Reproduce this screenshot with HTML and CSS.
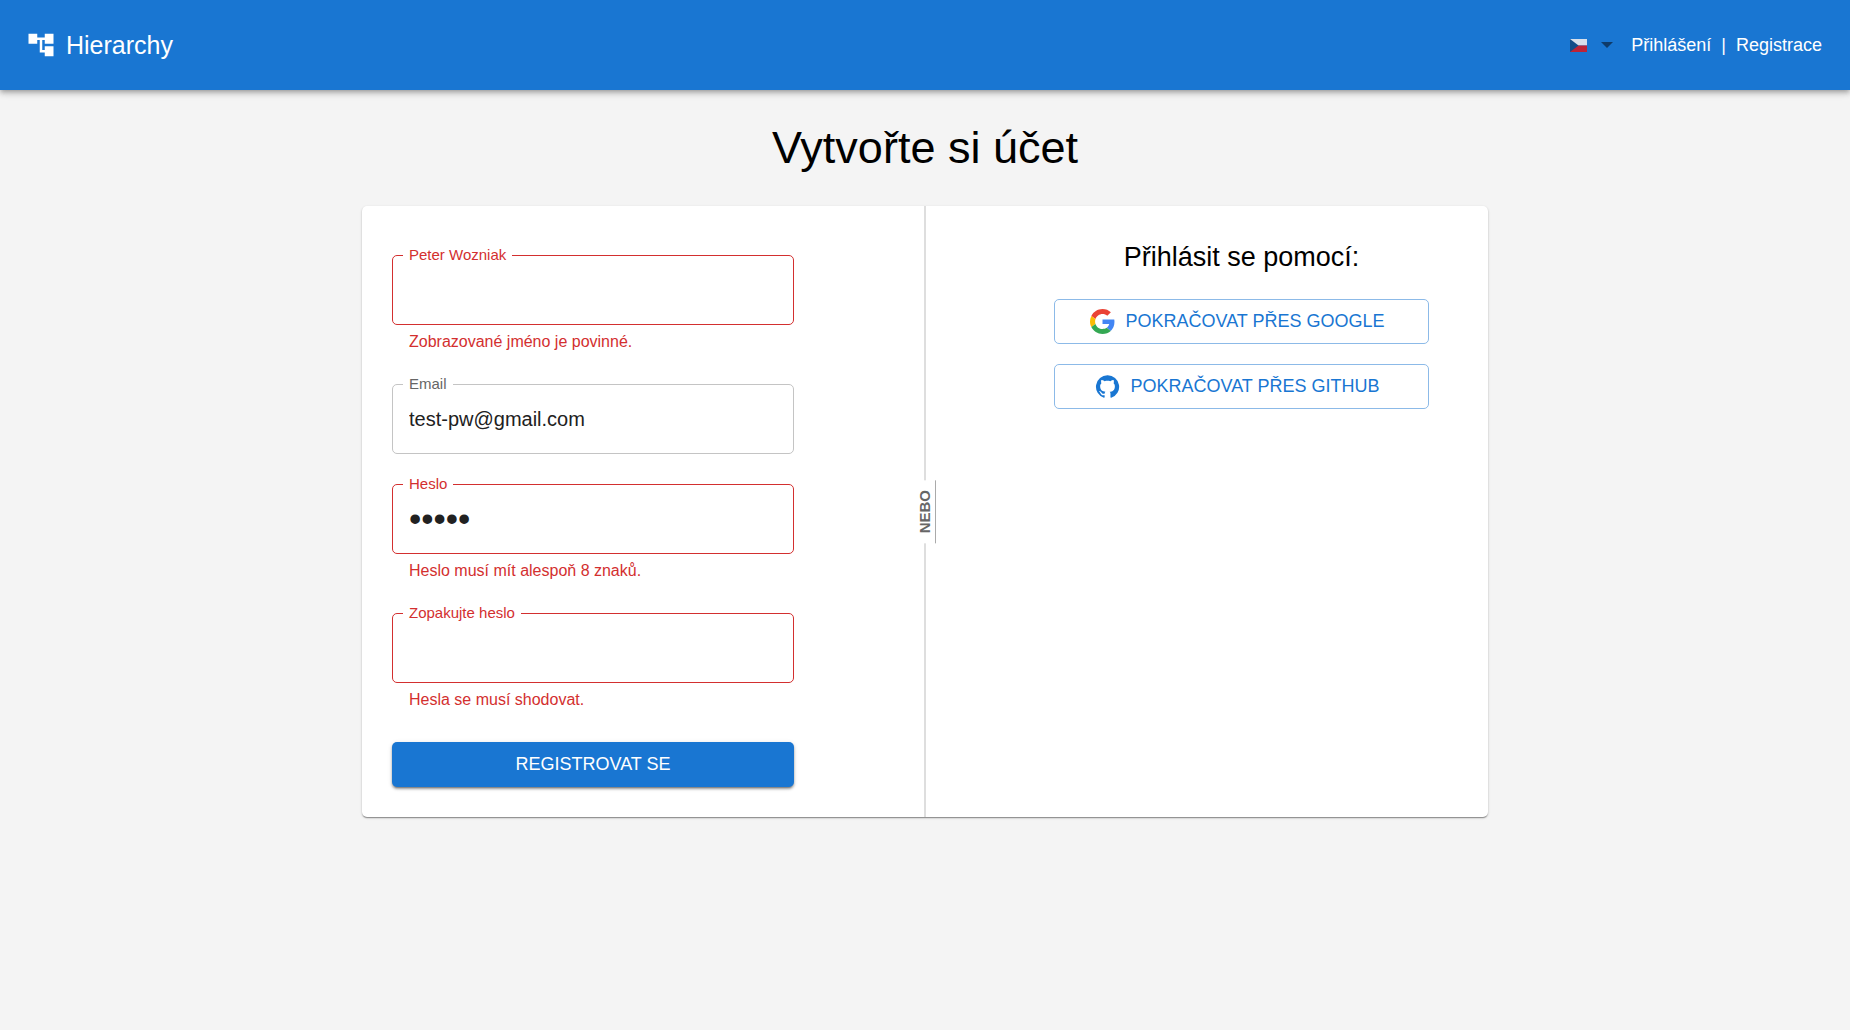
FILE: index.html
```html
<!DOCTYPE html>
<html lang="cs">
<head>
<meta charset="utf-8">
<meta name="viewport" content="width=device-width, initial-scale=1">
<title>Hierarchy</title>
<link rel="stylesheet" href="styles.css">
</head>
<body>
<header class="app-bar">
  <a class="brand" href="#">
    <svg class="brand-icon" viewBox="0 0 24 24" aria-hidden="true"><path d="M22 11V3h-7v3H9V3H2v8h7V8h2v10h4v3h7v-8h-7v3h-2V8h2v3z"/></svg>
    <span>Hierarchy</span>
  </a>
  <nav class="nav">
    <div class="language">
      <svg class="flag" viewBox="0 0 17 13" aria-hidden="true"><path fill="#d7dfeb" d="M0 0h17v6.500H0z"/><path fill="#bd2337" d="M0 6.500h17V13H0z"/><path fill="#124d89" d="M0 0l8.500 6.500L0 13z"/></svg>
      <svg class="arrow" viewBox="0 0 12 6" aria-hidden="true"><path d="M0 0h12L6 6z"/></svg>
      <select class="language-select" aria-label="Jazyk">
        <option value="cs" aria-label="Čeština"></option>
        <option value="en" aria-label="English"></option>
      </select>
    </div>
    <a href="#">Přihlášení</a>
    <span>|</span>
    <a href="#">Registrace</a>
  </nav>
</header>
<main class="page">
  <h1 class="title">Vytvořte si účet</h1>
  <div class="card">
    <section class="column">
      <form class="form" novalidate>
        <div class="field field-error">
          <div class="control">
            <label for="name">Peter Wozniak</label>
            <input id="name" type="text" aria-invalid="true" aria-describedby="name-help">
          </div>
          <p class="help" id="name-help">Zobrazované jméno je povinné.</p>
        </div>
        <div class="field">
          <div class="control">
            <label for="email">Email</label>
            <input id="email" type="email" value="test-pw@gmail.com">
          </div>
        </div>
        <div class="field field-error">
          <div class="control">
            <label for="password">Heslo</label>
            <input id="password" type="password" value="12345" aria-invalid="true" aria-describedby="password-help">
          </div>
          <p class="help" id="password-help">Heslo musí mít alespoň 8 znaků.</p>
        </div>
        <div class="field field-error">
          <div class="control">
            <label for="repeat">Zopakujte heslo</label>
            <input id="repeat" type="password" aria-invalid="true" aria-describedby="repeat-help">
          </div>
          <p class="help" id="repeat-help">Hesla se musí shodovat.</p>
        </div>
        <button class="button button-primary" type="submit">REGISTROVAT SE</button>
      </form>
    </section>
    <div class="divider"><span class="divider-text">NEBO</span></div>
    <section class="column column-social">
      <div class="social">
        <h2 class="subtitle">Přihlásit se pomocí:</h2>
        <button class="button button-outlined" type="button">
          <svg class="google" viewBox="0 0 48 48" aria-hidden="true"><path fill="#EA4335" d="M24 9.500c3.540 0 6.710 1.220 9.210 3.600l6.850-6.850C35.900 2.380 30.470 0 24 0 14.620 0 6.510 5.380 2.560 13.220l7.980 6.190C12.430 13.720 17.740 9.500 24 9.500z"/><path fill="#4285F4" d="M46.980 24.550c0-1.570-.15-3.090-.38-4.550H24v9.020h12.940c-.58 2.960-2.260 5.480-4.780 7.180l7.730 6c4.510-4.180 7.090-10.360 7.090-17.650z"/><path fill="#FBBC05" d="M10.530 28.590c-.48-1.450-.76-2.990-.76-4.590s.27-3.140.76-4.590l-7.980-6.190C.92 16.460 0 20.120 0 24c0 3.880.92 7.540 2.560 10.780l7.970-6.190z"/><path fill="#34A853" d="M24 48c6.480 0 11.930-2.130 15.890-5.810l-7.730-6c-2.150 1.450-4.920 2.300-8.160 2.300-6.260 0-11.570-4.220-13.470-9.910l-7.980 6.190C6.510 42.620 14.620 48 24 48z"/></svg>
          <span>POKRAČOVAT PŘES GOOGLE</span>
        </button>
        <button class="button button-outlined" type="button">
          <svg class="github" viewBox="0 0 24 24" aria-hidden="true"><path d="M12 1.270a11 11 0 00-3.480 21.460c.55.09.73-.28.73-.55v-1.840c-3.030.64-3.670-1.460-3.670-1.460-.55-1.290-1.280-1.650-1.280-1.650-.92-.65.1-.65.1-.65 1.100 0 1.730 1.100 1.730 1.100.92 1.650 2.570 1.200 3.210.92a2 2 0 01.64-1.470c-2.470-.27-5.040-1.190-5.040-5.500 0-1.100.46-2.100 1.200-2.840a3.760 3.760 0 010-2.930s.91-.28 3.110 1.100c1.800-.49 3.700-.49 5.500 0 2.100-1.380 3.020-1.100 3.020-1.100a3.760 3.760 0 01.1 2.930c.83.740 1.200 1.740 1.200 2.940 0 4.210-2.570 5.130-5.040 5.400.45.370.82.920.82 2.020v3.030c0 .27.1.640.73.550A11 11 0 0012 1.270"/></svg>
          <span>POKRAČOVAT PŘES GITHUB</span>
        </button>
      </div>
    </section>
  </div>
</main>
</body>
</html>
```
FILE: styles.css
```css
* {
  box-sizing: border-box;
}

body {
  margin: 0;
  min-height: 100vh;
  background: #f4f4f4;
  color: #000;
  font-family: "Liberation Sans", Arial, sans-serif;
  font-size: 18px;
}

a {
  color: inherit;
  text-decoration: none;
}

input,
button {
  font-family: inherit;
}

/* Top bar */
.app-bar {
  display: flex;
  align-items: center;
  justify-content: space-between;
  min-height: 90px;
  padding: 0 28px 0 26px;
  background: #1976d2;
  color: #fff;
  box-shadow: 0 2px 4px -1px rgba(0, 0, 0, 0.2), 0 4px 5px rgba(0, 0, 0, 0.14), 0 1px 10px rgba(0, 0, 0, 0.12);
}

.brand {
  display: flex;
  align-items: center;
  gap: 10px;
  font-size: 25px;
  line-height: 40px;
}

.brand-icon {
  width: 30px;
  height: 30px;
  fill: currentColor;
}

.nav {
  display: flex;
  align-items: center;
  gap: 10px;
}

.language {
  display: grid;
  grid-template-columns: 17px 12px;
  gap: 14px;
  align-items: center;
  margin-right: 8px;
}

.flag {
  grid-area: 1 / 1;
  width: 17px;
  height: 13px;
}

.arrow {
  grid-area: 1 / 2;
  width: 12px;
  height: 6px;
  fill: #0f3b69;
}

.language-select {
  grid-area: 1 / 1 / 2 / 3;
  width: 100%;
  height: 32px;
  border: 0;
  background: none;
  appearance: none;
  cursor: pointer;
}

/* Page */
.page {
  padding: 30px 20px;
}

.title {
  margin: 0 0 30px;
  font-size: 45px;
  font-weight: 400;
  line-height: 56px;
  text-align: center;
}

.card {
  display: flex;
  max-width: 1126px;
  margin: 0 auto;
  border-radius: 5px;
  background: #fff;
  box-shadow: 0 2px 1px -1px rgba(0, 0, 0, 0.2), 0 1px 1px rgba(0, 0, 0, 0.14), 0 1px 3px rgba(0, 0, 0, 0.12), 0 1px 2px rgba(0, 0, 0, 0.1);
}

.column {
  flex: 1 1 50%;
  min-width: 0;
  padding: 30px;
}

.form {
  display: flex;
  flex-direction: column;
  gap: 30px;
  max-width: 402px;
  padding-top: 19px;
}

.control {
  position: relative;
}

.control label {
  position: absolute;
  top: -10px;
  left: 11px;
  padding: 0 6px;
  background: #fff;
  color: #666;
  font-size: 15px;
  line-height: 20px;
}

.control input {
  display: block;
  width: 100%;
  height: 70px;
  padding: 0 16px;
  border: 1px solid #c4c4c4;
  border-radius: 5px;
  background: none;
  color: #212121;
  font-size: 20px;
}

/* Larger type gives full-sized password dots */
.control input[type="password"] {
  font-size: 35px;
}

.field-error label,
.help {
  color: #d32f2f;
}

.field-error input {
  border-color: #d32f2f;
}

.help {
  margin: 4px 17px 0;
  font-size: 16px;
  line-height: 25px;
}

.button {
  display: flex;
  align-items: center;
  justify-content: center;
  gap: 10px;
  width: 100%;
  height: 45px;
  padding: 0 20px;
  border: 0;
  border-radius: 5px;
  font-size: 18px;
  cursor: pointer;
}

.button-primary {
  background: #1976d2;
  color: #fff;
  box-shadow: 0 3px 1px -2px rgba(0, 0, 0, 0.2), 0 2px 2px rgba(0, 0, 0, 0.14), 0 1px 5px rgba(0, 0, 0, 0.12), 0 2px 3px rgba(0, 0, 0, 0.2);
}

.button-outlined {
  padding-right: 28px;
  border: 1px solid #8cbae8;
  background: #fff;
  color: #1976d2;
}

/* Divider between the two sign-up ways */
.divider {
  display: flex;
  flex: none;
  align-items: center;
  justify-content: center;
  width: 2px;
  background: #dedede;
}

.divider-text {
  flex: none;
  padding: 10px 2px;
  border-left: 1px solid #aaa;
  background: #fff;
  color: #666;
  font-size: 15px;
  font-weight: 700;
  line-height: 17px;
  writing-mode: vertical-rl;
  transform: rotate(180deg);
}

/* Social sign-in */
.column-social {
  display: flex;
  justify-content: flex-end;
  padding-right: 59px;
}

.social {
  display: flex;
  flex-direction: column;
  gap: 20px;
  width: 375px;
}

.subtitle {
  margin: 0;
  font-size: 27px;
  font-weight: 400;
  line-height: 43px;
  text-align: center;
}

.google {
  width: 25px;
  height: 25px;
}

.github {
  width: 25px;
  height: 25px;
  fill: currentColor;
}
```
